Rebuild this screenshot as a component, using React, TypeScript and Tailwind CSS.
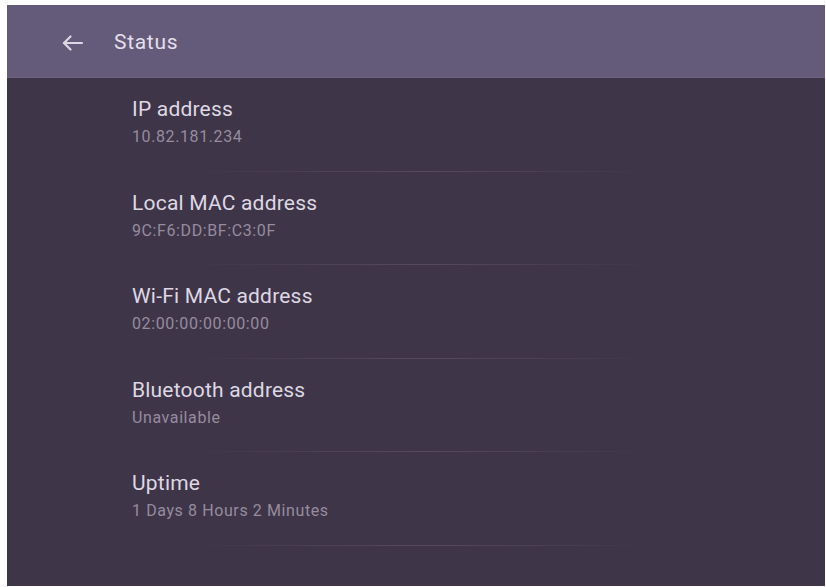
const rows = [
  { title: 'IP address', value: '10.82.181.234' },
  { title: 'Local MAC address', value: '9C:F6:DD:BF:C3:0F' },
  { title: 'Wi-Fi MAC address', value: '02:00:00:00:00:00' },
  { title: 'Bluetooth address', value: 'Unavailable' },
  { title: 'Uptime', value: '1 Days 8 Hours 2 Minutes' },
]

function BackArrow() {
  return (
    <svg width="22" height="16" viewBox="0 0 22 16" fill="none" stroke="#ddd7e4" strokeWidth="2.2" strokeLinecap="round" strokeLinejoin="round">
      <path d="M2 8h18" />
      <path d="M8.5 1.5 2 8l6.5 6.5" />
    </svg>
  )
}

export default function App() {
  return (
    <div className="w-[826px] h-[587px] bg-white pt-[5px] pl-[7px] pr-[1px] pb-[1px] font-['Roboto',sans-serif]">
      <div className="flex flex-col h-full bg-[#3f3548]">
        <div className="h-[73px] shrink-0 flex items-center bg-[#645a79] border-b border-[#6d6381]">
          <div className="ml-[55px] mt-[3px] w-[22px] flex items-center">
            <BackArrow />
          </div>
          <span className="ml-[30px] mt-[3px] text-[21px] tracking-[0.7px] text-[#e4dfea]">Status</span>
        </div>
        {rows.map(r => (
          <div key={r.title} className="h-[93.5px] shrink-0 flex flex-col">
            <div className="pl-[125px] pt-[19px] text-[21px] leading-[24px] text-[#ddd8e3] tracking-[0.2px]">
              {r.title}
            </div>
            <div className="pl-[125px] mt-[7px] text-[16px] leading-[18px] tracking-[0.6px] text-[#958c9f]">
              {r.value}
            </div>
            <div className="mt-auto ml-[180px] w-[470px] h-px bg-gradient-to-r from-transparent via-[#554a60] to-transparent" />
          </div>
        ))}
      </div>
    </div>
  )
}
